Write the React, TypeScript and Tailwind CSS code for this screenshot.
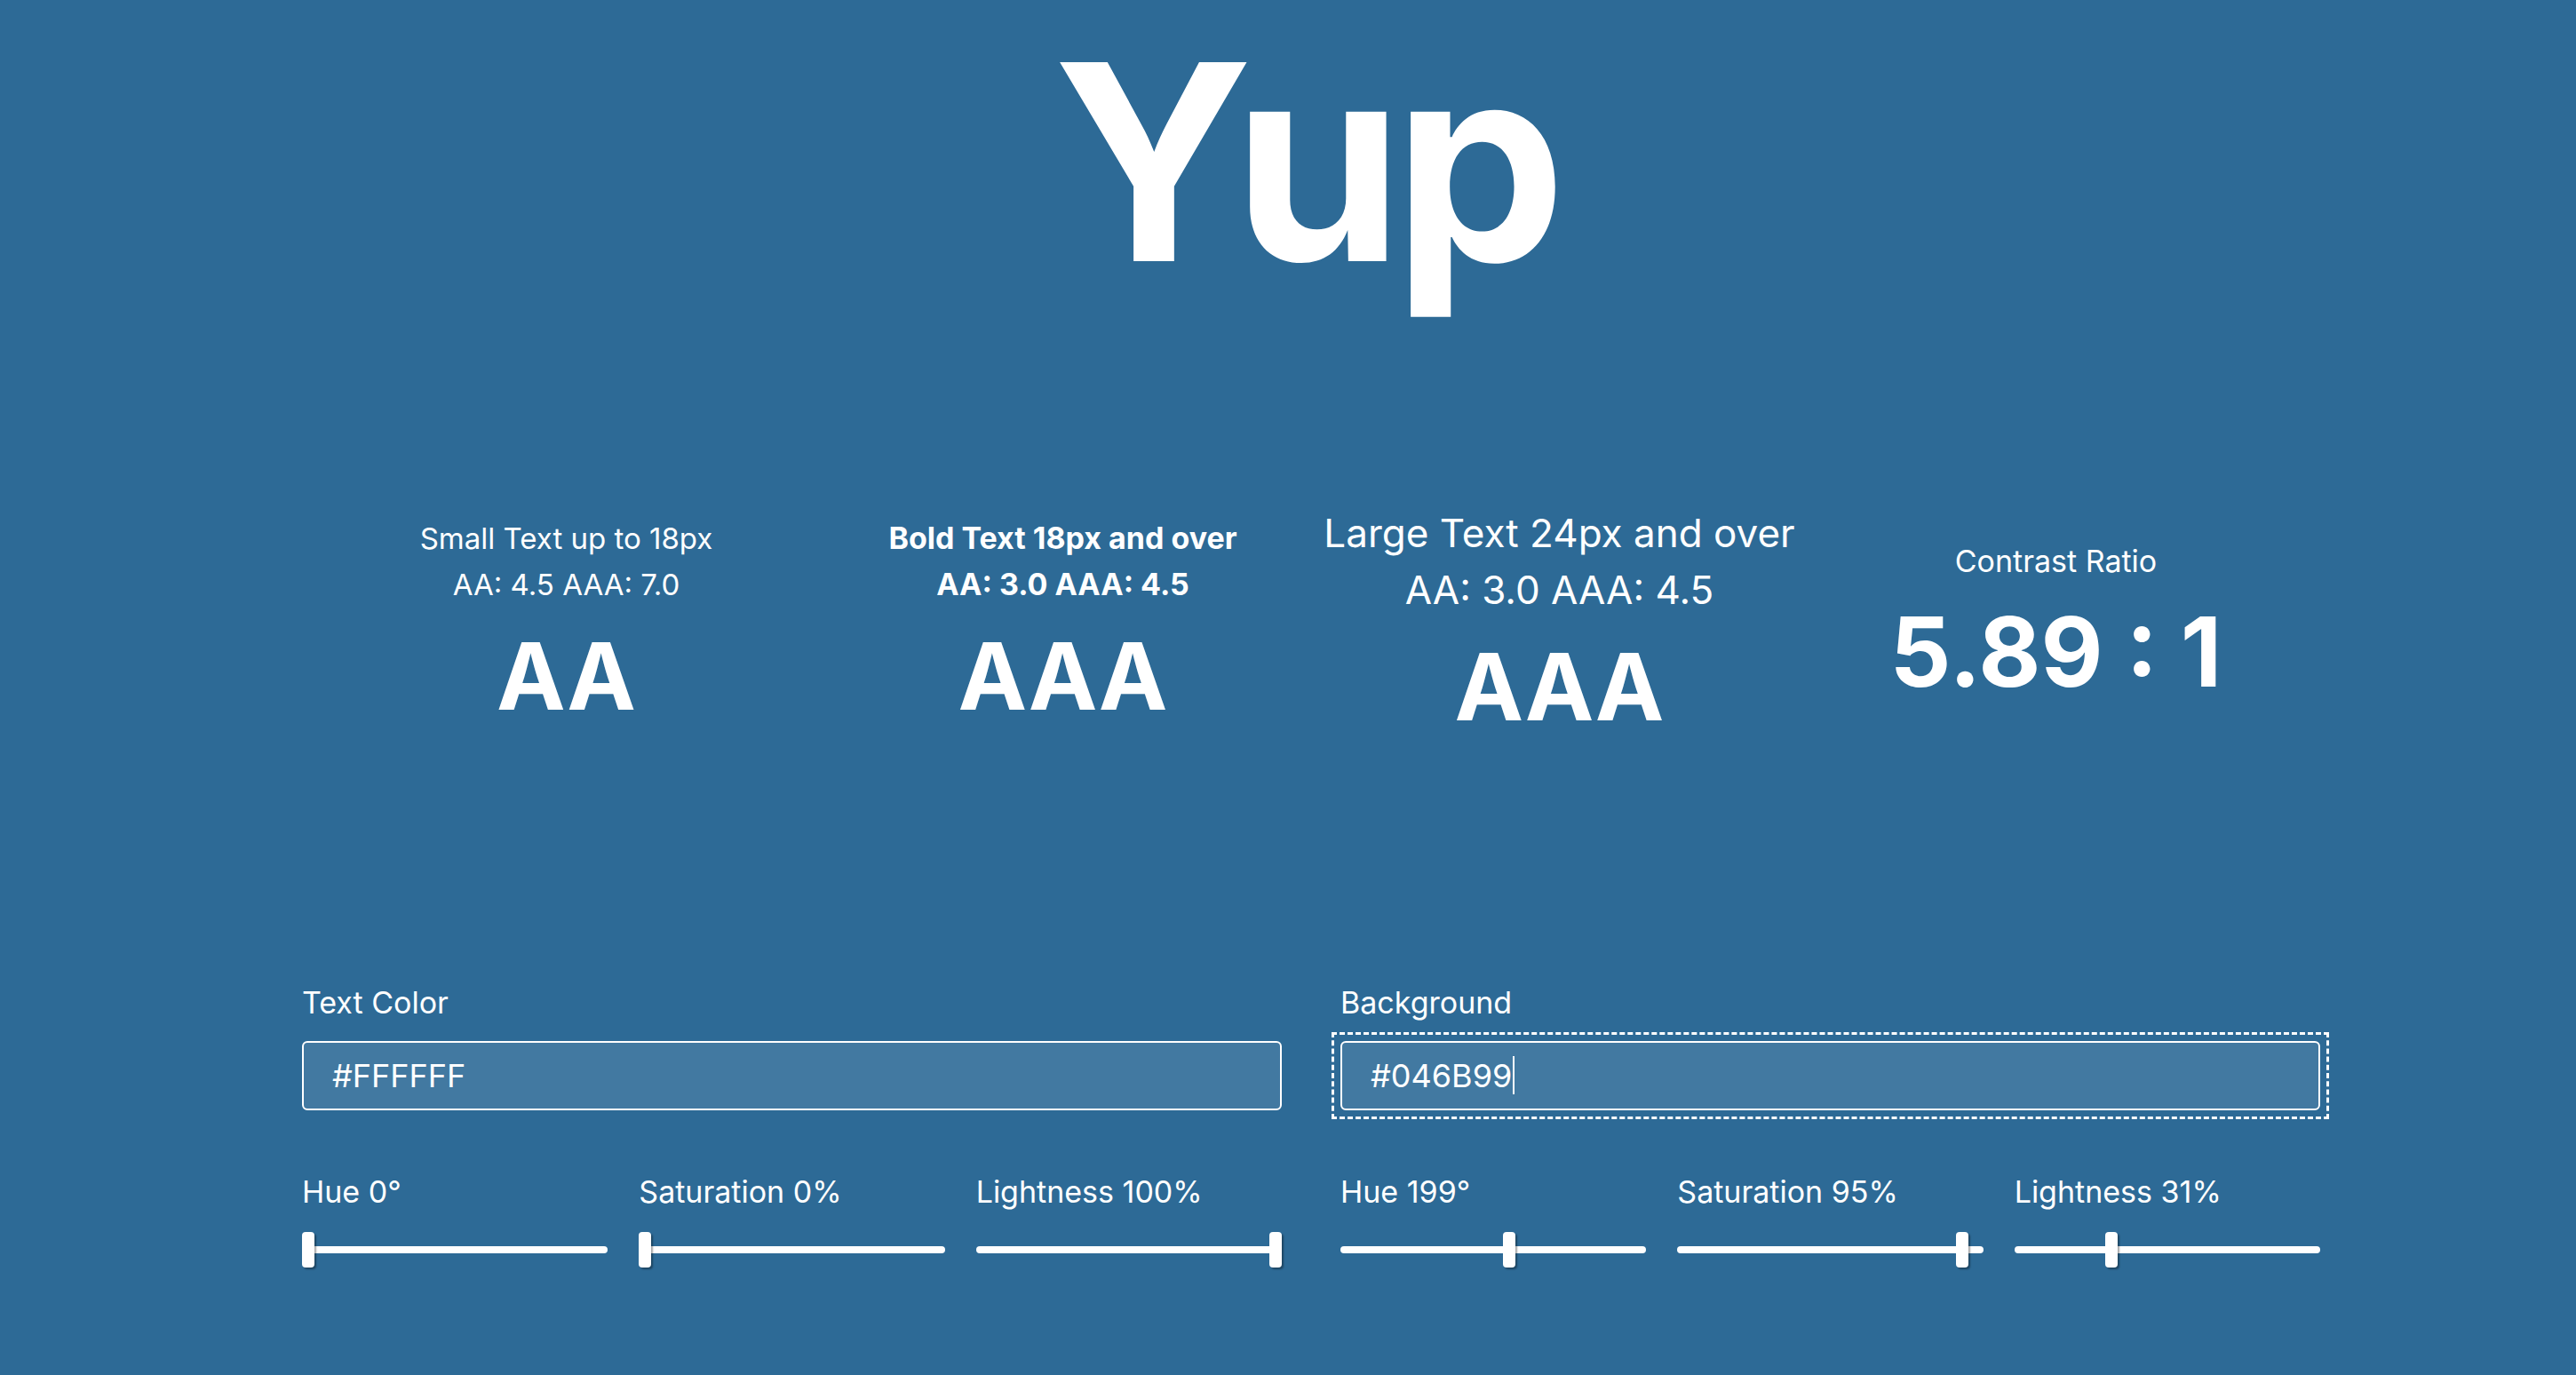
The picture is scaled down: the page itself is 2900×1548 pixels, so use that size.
import React from 'react';

type SliderProps = { label: string; value: number; max: number };

function Slider({ label, value, max }: SliderProps) {
  const pct = value / max;
  return (
    <div className="flex flex-1 flex-col">
      <span className="text-[34px] leading-[52px]">{label}</span>
      <div className="relative mt-[19px] h-[40px]">
        <div className="absolute inset-x-0 top-[16px] h-[8px] rounded-full bg-white" />
        <div
          className="absolute top-0 h-[40px] w-[14px] rounded-[4px] bg-white shadow-[2px_2px_2px_rgba(0,0,0,0.35)]"
          style={{ left: `calc((100% - 14px) * ${pct})` }}
        />
      </div>
    </div>
  );
}

type FieldProps = {
  label: string;
  value: string;
  focused?: boolean;
  sliders: SliderProps[];
};

function ColorField({ label, value, focused, sliders }: FieldProps) {
  return (
    <div className="flex flex-1 flex-col">
      <label className="mb-[17px] text-[34px] leading-[52px]">{label}</label>
      <div
        role="textbox"
        className="relative flex h-[78px] items-center rounded-[6px] border-2 border-white bg-white/10 px-[32px] text-[36px]"
      >
        <span>{value}</span>
        {focused && <span className="ml-[1px] h-[43px] w-[2px] bg-white" />}
        {focused && (
          <div className="pointer-events-none absolute -inset-[12px] border-[3px] border-dashed border-white" />
        )}
      </div>
      <div className="mt-[66px] flex gap-[35px]">
        {sliders.map((s) => (
          <Slider key={s.label} {...s} />
        ))}
      </div>
    </div>
  );
}

function Stat({
  title,
  sub,
  result,
  bold,
  large,
}: {
  title: string;
  sub: string;
  result: string;
  bold?: boolean;
  large?: boolean;
}) {
  const textCls = large
    ? 'text-[44px] leading-[64px]'
    : bold
      ? 'text-[34px] leading-[52px] font-bold'
      : 'text-[33px] leading-[52px]';
  return (
    <div className="flex flex-col items-center text-center">
      <span className={textCls}>{title}</span>
      <span className={textCls}>{sub}</span>
      <span className="mt-[25px] text-[104px] font-bold leading-none">{result}</span>
    </div>
  );
}

export default function App() {
  return (
    <div className="min-h-screen w-full bg-[#2d6a96] pl-[52px] font-['Inter','Noto_Sans',sans-serif] text-white">
      <h1 className="pr-[14px] pt-[13px] text-center text-[308px] font-bold leading-[1.1] tracking-[-0.035em]">
        Yup
      </h1>

      <div className="mx-auto mt-[145px] grid h-[400px] w-[2236px] grid-cols-4 items-center">
        <Stat title="Small Text up to 18px" sub="AA: 4.5 AAA: 7.0" result="AA" />
        <Stat title="Bold Text 18px and over" sub="AA: 3.0 AAA: 4.5" result="AAA" bold />
        <Stat title="Large Text 24px and over" sub="AA: 3.0 AAA: 4.5" result="AAA" large />
        <div className="flex flex-col items-center text-center">
          <span className="text-[34px] leading-[52px]">Contrast Ratio</span>
          <span className="mt-[22px] text-[108px] font-bold leading-none">5.89 : 1</span>
        </div>
      </div>

      <div className="mx-auto mt-[206px] flex w-[2272px] gap-[66px] pb-[100px]">
        <ColorField
          label="Text Color"
          value="#FFFFFF"
          sliders={[
            { label: 'Hue 0°', value: 0, max: 360 },
            { label: 'Saturation 0%', value: 0, max: 100 },
            { label: 'Lightness 100%', value: 100, max: 100 },
          ]}
        />
        <ColorField
          label="Background"
          value="#046B99"
          focused
          sliders={[
            { label: 'Hue 199°', value: 199, max: 360 },
            { label: 'Saturation 95%', value: 95, max: 100 },
            { label: 'Lightness 31%', value: 31, max: 100 },
          ]}
        />
      </div>
    </div>
  );
}
